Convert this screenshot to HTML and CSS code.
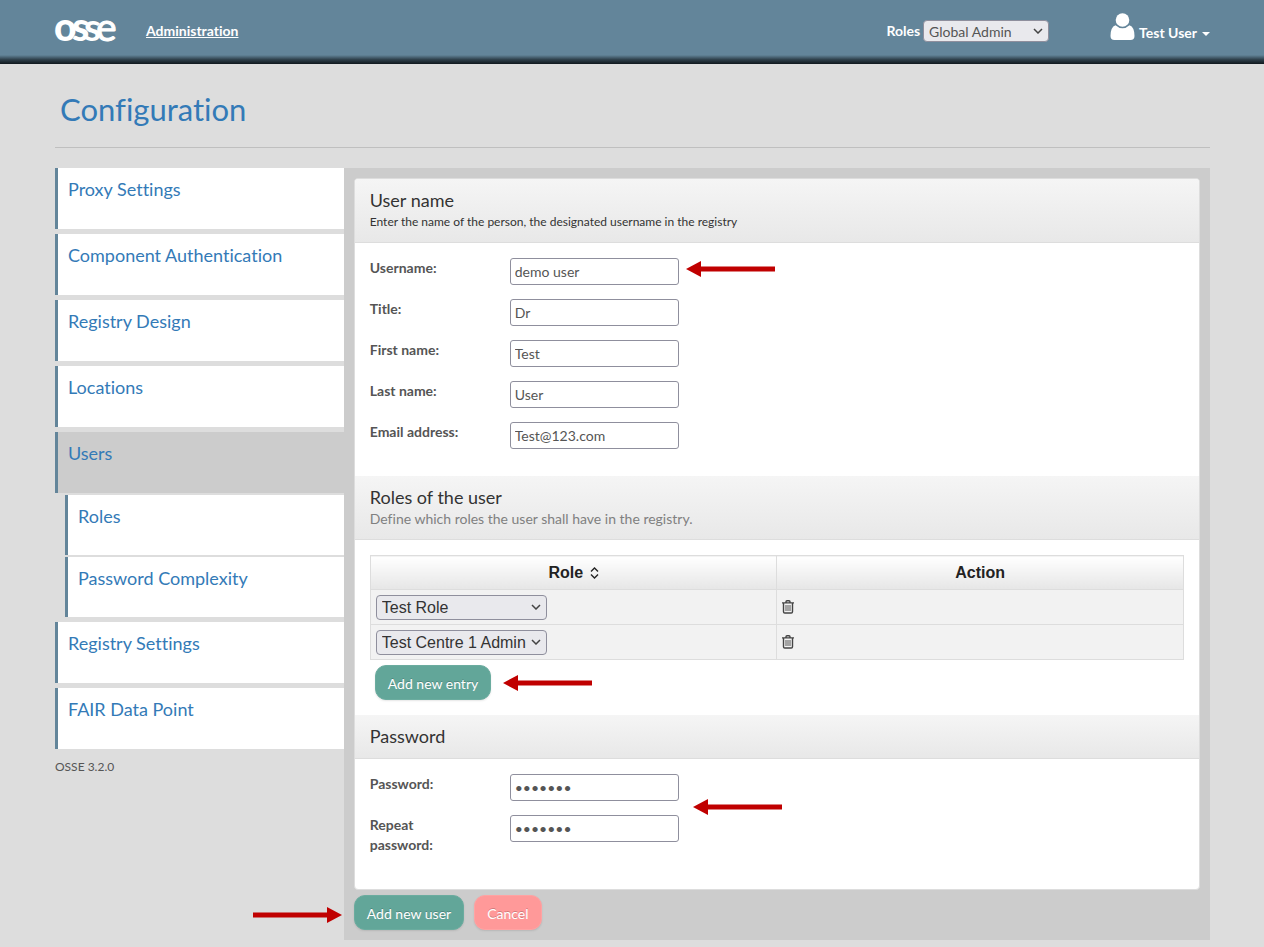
FILE: index.html
```html
<!DOCTYPE html>
<html lang="en">
<head>
    <meta charset="UTF-8">
    <meta name="viewport" content="width=device-width, initial-scale=1.0">
    <title>OSSE - Configuration</title>
    <link rel="stylesheet" href="styles.css">
</head>
<body>
    <!-- Shared icons -->
    <svg class="symbols" aria-hidden="true">
        <symbol id="arrow-left" viewBox="0 0 90 16">
            <path d="M0 8L15 0V5.500H89V10.500H15V16Z" fill="#c00000"/>
        </symbol>
        <symbol id="arrow-right" viewBox="0 0 90 16">
            <path d="M90 8L75 0V5.500H1V10.500H75V16Z" fill="#c00000"/>
        </symbol>
        <symbol id="trash" viewBox="0 0 12 14">
            <path d="M0 2.900H12M4 2.500V1.700Q4 .8 5 .8H7Q8 .8 8 1.700V2.500" fill="none" stroke="#444" stroke-width="1.400"/>
            <path d="M1.500 3V11.700Q1.500 13 2.800 13H9.200Q10.500 13 10.500 11.700V3" fill="none" stroke="#444" stroke-width="1.400"/>
            <path d="M4 5V11M6 5V11M8 5V11" stroke="#555" stroke-width="1"/>
        </symbol>
    </svg>

    <header class="navbar">
        <a href="#" class="logo" aria-label="OSSE">
            <svg width="62" height="30" viewBox="0 0 62 30">
                <text y="25" class="logo-text"><tspan x="-1" class="l1">o</tspan><tspan x="17" class="l2">s</tspan><tspan x="29" class="l3">s</tspan><tspan x="41" class="l4">e</tspan></text>
            </svg>
        </a>
        <a href="#" class="nav-link">Administration</a>
        <div class="nav-roles">
            <label for="activeRole">Roles</label>
            <select id="activeRole" class="select role-select">
                <option>Global Admin</option>
            </select>
        </div>
        <button type="button" class="user-menu">
            <svg width="25" height="28" viewBox="0 0 25 28" fill="#fff">
                <circle cx="12.500" cy="7" r="6.800"/>
                <path d="M5.500 12.200Q12.500 18.500 19.500 12.200Q24.500 14 24.500 23Q24.500 27 20.500 27H4.500Q.5 27 .5 23Q.5 14 5.500 12.200Z"/>
            </svg>
            <span>Test User</span>
            <i class="caret"></i>
        </button>
    </header>

    <div class="container">
        <h1>Configuration</h1>

        <div class="columns">
            <aside class="sidebar">
                <nav class="menu">
                    <a href="#">Proxy Settings</a>
                    <a href="#">Component Authentication</a>
                    <a href="#">Registry Design</a>
                    <a href="#">Locations</a>
                    <a href="#" class="active">Users</a>
                    <a href="#" class="sub">Roles</a>
                    <a href="#" class="sub">Password Complexity</a>
                    <a href="#">Registry Settings</a>
                    <a href="#">FAIR Data Point</a>
                </nav>
                <p class="version">OSSE 3.2.0</p>
            </aside>

            <main class="content">
                <form class="user-form" onsubmit="return false">
                    <div class="panel">
                        <div class="panel-head">
                            <h2>User name</h2>
                            <p class="hint">Enter the name of the person, the designated username in the registry</p>
                        </div>
                        <div class="fields name-fields">
                            <div class="field">
                                <label for="username">Username:</label>
                                <input type="text" id="username" value="demo user">
                                <svg class="arrow"><use href="#arrow-left"/></svg>
                            </div>
                            <div class="field">
                                <label for="title">Title:</label>
                                <input type="text" id="title" value="Dr">
                            </div>
                            <div class="field">
                                <label for="firstName">First name:</label>
                                <input type="text" id="firstName" value="Test">
                            </div>
                            <div class="field">
                                <label for="lastName">Last name:</label>
                                <input type="text" id="lastName" value="User">
                            </div>
                            <div class="field">
                                <label for="email">Email address:</label>
                                <input type="email" id="email" value="Test@123.com">
                            </div>
                        </div>

                        <div class="panel-head">
                            <h2>Roles of the user</h2>
                            <p class="hint muted">Define which roles the user shall have in the registry.</p>
                        </div>
                        <div class="roles">
                            <table>
                                <thead>
                                    <tr>
                                        <th>Role
                                            <svg width="9" height="12" viewBox="0 0 9 12" fill="none" stroke="#222" stroke-width="1.400"><path d="M1 4.500L4.500 1L8 4.500M1 7.500L4.500 11L8 7.500"/></svg>
                                        </th>
                                        <th>Action</th>
                                    </tr>
                                </thead>
                                <tbody>
                                    <tr>
                                        <td><select class="select" aria-label="Role 1"><option>Test Role</option></select></td>
                                        <td><button type="button" class="delete" aria-label="Delete role 1"><svg width="12" height="14"><use href="#trash"/></svg></button></td>
                                    </tr>
                                    <tr>
                                        <td><select class="select" aria-label="Role 2"><option>Test Centre 1 Admin</option></select></td>
                                        <td><button type="button" class="delete" aria-label="Delete role 2"><svg width="12" height="14"><use href="#trash"/></svg></button></td>
                                    </tr>
                                </tbody>
                            </table>
                            <div class="add-entry">
                                <button type="button" class="btn">Add new entry</button>
                                <svg class="arrow"><use href="#arrow-left"/></svg>
                            </div>
                        </div>

                        <div class="panel-head">
                            <h2>Password</h2>
                        </div>
                        <div class="fields password-fields">
                            <div class="field">
                                <label for="password">Password:</label>
                                <input type="password" id="password" value="demo123">
                            </div>
                            <div class="field">
                                <label for="repeatPassword">Repeat password:</label>
                                <input type="password" id="repeatPassword" value="demo123">
                            </div>
                            <svg class="arrow arrow-password"><use href="#arrow-left"/></svg>
                        </div>
                    </div>

                    <div class="actions">
                        <svg class="arrow arrow-submit"><use href="#arrow-right"/></svg>
                        <button type="submit" class="btn">Add new user</button>
                        <button type="button" class="btn btn-cancel">Cancel</button>
                    </div>
                </form>
            </main>
        </div>
    </div>
</body>
</html>
```

FILE: styles.css
```css
* {
    margin: 0;
    padding: 0;
    box-sizing: border-box;
}

body {
    font-family: Lato, sans-serif;
    font-size: 14px;
    font-variant-ligatures: no-common-ligatures;
    line-height: 20px;
    color: #555;
    background: #ddd;
}

a {
    color: #337ab7;
    text-decoration: none;
}

input, select, button {
    font-family: inherit;
    font-size: 14px;
    color: #555;
}

.symbols {
    position: absolute;
    width: 0;
    height: 0;
}

/* Top bar */
.navbar {
    display: flex;
    align-items: center;
    height: 64px;
    padding: 0 54px 2px 55px;
    background: linear-gradient(transparent, #2f414c 50%, #10181d) no-repeat bottom / 100% 9px, #63859a;
    color: #fff;
    font-weight: bold;
}

.logo, .logo svg {
    display: block;
}

.logo svg {
    overflow: visible;
}

.logo-text {
    font-size: 39px;
    font-weight: 900;
    fill: #fff;
}

.l3 {
    font-weight: 700;
}

.l4 {
    font-weight: 400;
    stroke: #fff;
}

.nav-link {
    margin-left: 29px;
    color: #fff;
    text-decoration: underline;
}

.nav-roles {
    display: flex;
    align-items: center;
    gap: 3px;
    margin-left: auto;
}

.user-menu {
    display: flex;
    align-items: flex-end;
    gap: 4px;
    margin-left: 61px;
    padding-bottom: 8px;
    border: none;
    background: none;
    color: #fff;
    font-weight: bold;
    cursor: pointer;
}

.caret {
    margin: 0 0 5px 1px;
    border-top: 4px solid #fff;
    border-left: 4px solid transparent;
    border-right: 4px solid transparent;
}

.select {
    appearance: none;
    width: 171px;
    height: 25px;
    padding: 0 5px;
    border: 1px solid #8f8f9d;
    border-radius: 4px;
    background: #e9e9ed url("data:image/svg+xml,%3Csvg xmlns='http://www.w3.org/2000/svg' width='10' height='6' fill='none' stroke='%23444' stroke-width='1.500'%3E%3Cpath d='M1 1l4 4 4-4'/%3E%3C/svg%3E") no-repeat right 5px center;
}

.role-select {
    width: 126px;
    height: 22px;
}

/* Page */
.container {
    padding: 25px 54px 9px 55px;
}

h1 {
    padding: 0 5px 18px;
    margin-bottom: 20px;
    border-bottom: 1px solid #bfbfbf;
    color: #337ab7;
    font-size: 31px;
    font-weight: normal;
    line-height: 40px;
}

.columns {
    display: grid;
    grid-template-columns: 1fr 3fr;
    align-items: start;
}

/* Sidebar menu */
.menu a {
    display: block;
    height: 61px;
    margin-bottom: 5px;
    padding: 8px 10px;
    border-left: 3px solid #63859a;
    background: #fff;
    font-size: 18px;
    line-height: 26px;
}

.menu a.active {
    margin-bottom: 2px;
    background: #ccc;
}

.menu a.sub {
    height: 60px;
    margin-left: 10px;
}

.menu a.sub:has(+ .sub) {
    margin-bottom: 2px;
}

.version {
    margin-top: 8px;
    font-size: 12px;
}

/* Form */
.content {
    padding: 10px;
    background: #ccc;
}

.panel {
    border: 1px solid #ddd;
    border-radius: 4px;
    background: #fff;
    overflow: hidden;
}

.panel-head {
    padding: 10px 15px;
    border-bottom: 1px solid #ddd;
    background: linear-gradient(#f5f5f5, #e8e8e8);
    color: #333;
}

h2 {
    font-size: 18px;
    font-weight: normal;
    line-height: 23px;
}

.hint {
    font-size: 12px;
}

.hint.muted {
    color: #808080;
    font-size: 14px;
}

.fields {
    display: flex;
    flex-direction: column;
    gap: 14px;
    padding: 15px;
}

.name-fields {
    padding-bottom: 27px;
}

.password-fields {
    position: relative;
    padding-bottom: 47px;
}

.field {
    display: flex;
    align-items: flex-start;
    height: 27px;
}

.field label {
    width: 110px;
    margin-right: 30px;
    font-weight: bold;
}

.field input {
    width: 169px;
    height: 27px;
    padding: 0 4px;
    border: 1px solid #8f8f9d;
    border-radius: 3px;
    background: #fff;
}

.arrow {
    flex: none;
    width: 90px;
    height: 16px;
}

.field .arrow {
    margin: 3px 0 0 7px;
}

.arrow-password {
    position: absolute;
    top: 40px;
    left: 338px;
}

/* Roles table */
.roles {
    padding: 15px;
}

table {
    width: 100%;
    border-collapse: collapse;
    table-layout: fixed;
    font-family: "Liberation Sans", Arial, sans-serif;
    font-size: 16px;
}

th, td {
    border: 1px solid #ddd;
}

th {
    height: 34px;
    background: linear-gradient(#fff, #e6e6e6);
    color: #222;
}

th svg {
    margin-left: 2px;
    vertical-align: -1px;
}

td {
    height: 35px;
    padding: 0 5px;
    background: #f2f2f2;
}

td .select {
    display: block;
    font-size: 16px;
    color: #333;
}

.delete {
    display: block;
    border: none;
    background: none;
    cursor: pointer;
}

.delete svg {
    display: block;
}

.add-entry {
    display: flex;
    align-items: center;
    gap: 12px;
    padding: 5px 5px 0;
}

.btn {
    height: 35px;
    padding: 2px 12px 0;
    border: 1px solid #6bac9f;
    border-radius: 11px;
    background: #62a699;
    box-shadow: 0 1px 2px rgba(0, 0, 0, 0.1);
    color: #fff;
    text-shadow: 0 -1px 0 rgba(0, 0, 0, 0.2);
    cursor: pointer;
}

.btn-cancel {
    border-color: #ffa3a3;
    background: #ff9999;
}

.actions {
    position: relative;
    display: flex;
    gap: 10px;
    padding-top: 5px;
}

.arrow-submit {
    position: absolute;
    top: 17px;
    right: 100%;
    margin-right: 12px;
}
```
